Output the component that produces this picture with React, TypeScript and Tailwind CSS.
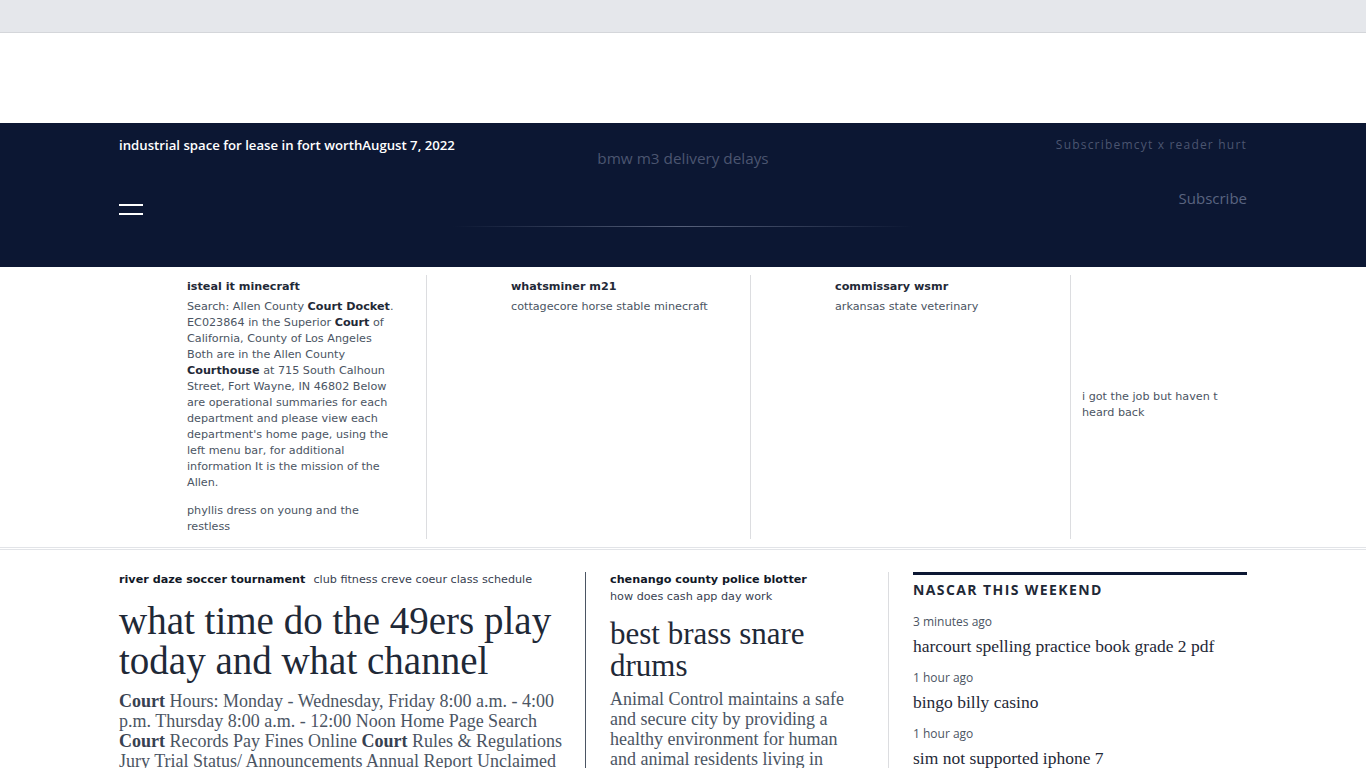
import React from "react";

const sans = "font-['DejaVu_Sans','Noto_Sans',sans-serif]";
const open = "font-['Open_Sans','Noto_Sans',sans-serif]";
const serif = "font-['Liberation_Serif','Noto_Serif',serif]";

export default function App() {
  return (
    <div className={`min-h-screen bg-white ${sans}`}>
      <div className="h-[33px] bg-[#e5e7eb] border-b border-[#d4d6da]" />
      <div className="h-[90px] bg-white" />
      <header className="bg-[#0c1733] h-[144px]">
        <div className="mx-auto w-[1128px] h-full flex flex-col">
          <div className="flex items-start pt-[14px] h-[58px]">
            <div className={`w-[376px] text-[13.2px] text-white font-semibold leading-4 whitespace-nowrap ${open}`}>
              industrial space for lease in fort worthAugust 7, 2022
            </div>
            <div className={`flex-1 text-center text-[15.3px] text-[#4b5570] pt-[10px] ${open}`}>bmw m3 delivery delays</div>
            <div className={`w-[376px] text-right text-[12px] text-[#4b5570] tracking-[0.1em] leading-4 ${open}`}>
              Subscribemcyt x reader hurt
            </div>
          </div>
          <div className="flex items-start h-[42px]">
            <div className="w-[376px] flex flex-col gap-[7px] pt-[23px]">
              <div className="w-[24px] h-[2px] bg-white" />
              <div className="w-[24px] h-[2px] bg-white" />
            </div>
            <div className="flex-1" />
            <div className={`w-[376px] text-right text-[15px] text-[#5a6480] pt-[6px] ${open}`}>Subscribe</div>
          </div>
          <div className="flex justify-center pt-[3px]">
            <div className="w-[460px] h-px bg-gradient-to-r from-transparent via-[#56607a] to-transparent" />
          </div>
        </div>
      </header>

      <section className="border-b-[3px] border-double border-[#e2e4e8]">
        <div className="mx-auto w-[1128px] flex py-[8px] h-[280px]">
          <div className="w-[308px] pl-[68px] pr-[28px] pt-[4px] border-r border-[#dcdde0]">
            <div className="text-[11.2px] font-bold text-[#1f2937] leading-4">isteal it minecraft</div>
            <p className="text-[11.2px] text-[#4b5563] leading-4 mt-[4px]">
              Search: Allen County <b className="text-[#1f2937]">Court Docket</b>. EC023864 in the Superior <b className="text-[#1f2937]">Court</b> of California, County of Los Angeles Both are in the Allen County <b className="text-[#1f2937]">Courthouse</b> at 715 South Calhoun Street, Fort Wayne, IN 46802 Below are operational summaries for each department and please view each department's home page, using the left menu bar, for additional information It is the mission of the Allen.
            </p>
            <p className="text-[11.2px] text-[#4b5563] leading-4 mt-[12px] w-[190px]">phyllis dress on young and the restless</p>
          </div>
          <div className="w-[324px] pl-[84px] pr-[16px] pt-[4px] border-r border-[#dcdde0]">
            <div className="text-[11.2px] font-bold text-[#1f2937] leading-4">whatsminer m21</div>
            <p className="text-[11.2px] text-[#4b5563] leading-4 mt-[4px]">cottagecore horse stable minecraft</p>
          </div>
          <div className="w-[320px] pl-[84px] pr-[16px] pt-[4px] border-r border-[#dcdde0]">
            <div className="text-[11.2px] font-bold text-[#1f2937] leading-4">commissary wsmr</div>
            <p className="text-[11.2px] text-[#4b5563] leading-4 mt-[4px]">arkansas state veterinary</p>
          </div>
          <div className="flex-1 pl-[11px] flex items-center">
            <p className="text-[11.2px] text-[#4b5563] leading-4 w-[155px] -mt-[4px]">i got the job but haven t heard back</p>
          </div>
        </div>
      </section>

      <main className="mx-auto w-[1128px] flex pt-[22px]">
        <div className="w-[467px] pr-[22px] border-r border-[#4b5563]">
          <div className="flex gap-[8px] text-[11.2px] leading-4 pt-0">
            <span className="font-bold text-[#111827]">river daze soccer tournament</span>
            <span className="text-[#374151]">club fitness creve coeur class schedule</span>
          </div>
          <h1 className={`${serif} text-[39px] leading-[40px] text-[#1f2937] mt-[13px]`}>
            what time do the 49ers play today and what channel
          </h1>
          <p className={`${serif} text-[18px] leading-[20px] text-[#4b5563] mt-[10px]`}>
            <b className="text-[#374151]">Court</b> Hours: Monday - Wednesday, Friday 8:00 a.m. - 4:00 p.m. Thursday 8:00 a.m. - 12:00 Noon Home Page Search <b className="text-[#374151]">Court</b> Records Pay Fines Online <b className="text-[#374151]">Court</b> Rules &amp; Regulations Jury Trial Status/ Announcements Annual Report Unclaimed
          </p>
        </div>
        <div className="w-[303px] pl-[24px] pr-[34px] border-r border-[#dcdde0]">
          <div className="text-[11.2px] font-bold text-[#111827] leading-4">chenango county police blotter</div>
          <div className="text-[11.2px] text-[#374151] leading-4 mt-px">how does cash app day work</div>
          <h2 className={`${serif} text-[31px] leading-[32px] text-[#1f2937] mt-[13px]`}>best brass snare drums</h2>
          <p className={`${serif} text-[18px] leading-[20px] text-[#4b5563] mt-[7px]`}>
            Animal Control maintains a safe and secure city by providing a healthy environment for human and animal residents living in
          </p>
        </div>
        <div className="flex-1 pl-[24px]">
          <div className="border-t-[3px] border-[#0c1733] pt-[5px]">
            <div className={`text-[14px] font-bold tracking-[0.1em] text-[#1f2937] leading-5 ${open}`}>NASCAR THIS WEEKEND</div>
            <div className={`text-[12px] text-[#4b5563] leading-4 mt-[14px] ${open}`}>3 minutes ago</div>
            <div className={`${serif} text-[17.5px] text-[#1f2937] leading-5 mt-[6px]`}>harcourt spelling practice book grade 2 pdf</div>
            <div className={`text-[12px] text-[#4b5563] leading-4 mt-[14px] ${open}`}>1 hour ago</div>
            <div className={`${serif} text-[17.5px] text-[#1f2937] leading-5 mt-[6px]`}>bingo billy casino</div>
            <div className={`text-[12px] text-[#4b5563] leading-4 mt-[14px] ${open}`}>1 hour ago</div>
            <div className={`${serif} text-[17.5px] text-[#1f2937] leading-5 mt-[6px]`}>sim not supported iphone 7</div>
          </div>
        </div>
      </main>
    </div>
  );
}
